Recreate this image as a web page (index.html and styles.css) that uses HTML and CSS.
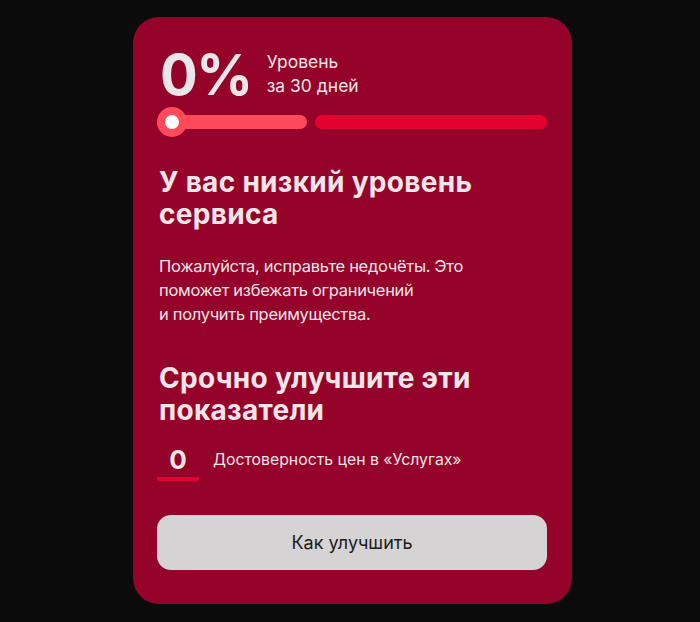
FILE: index.html
```html
<!DOCTYPE html>
<html lang="ru">
<head>
    <meta charset="UTF-8">
    <meta name="viewport" content="width=device-width, initial-scale=1.0">
    <title>Уровень сервиса</title>
    <link rel="stylesheet" href="styles.css">
</head>
<body>
    <div class="card">
        <!-- Уровень за 30 дней -->
        <div class="level">
            <span class="level-value">0%</span>
            <span class="level-caption">Уровень<br>за 30 дней</span>
        </div>
        <div class="progress">
            <div class="progress-low">
                <span class="knob"></span>
            </div>
            <div class="progress-rest"></div>
        </div>

        <h2>У вас низкий уровень сервиса</h2>
        <p class="note">Пожалуйста, исправьте недочёты. Это<br>поможет избежать ограничений<br>и&nbsp;получить преимущества.</p>

        <h2 class="urgent">Срочно улучшите эти показатели</h2>
        <div class="metric">
            <span class="metric-value">0</span>
            <span class="metric-name">Достоверность цен в «Услугах»</span>
        </div>

        <button type="button">Как улучшить</button>
    </div>
</body>
</html>
```

FILE: styles.css
```css
body {
    margin: 0;
    background-color: #0b0b0b;
    font-family: 'Inter', 'Noto Sans', sans-serif;
    height: 622px;
    overflow: hidden;
}

/* Карточка */
.card {
    box-sizing: border-box;
    width: 439px;
    height: 587px;
    margin: 17px 0 0 133px;
    padding: 30px 25px 0 24px;
    background-color: #96032a;
    border-radius: 26px;
    color: #ede3e6;
    display: flex;
    flex-direction: column;
}

.level {
    display: flex;
    align-items: flex-start;
    gap: 15px;
    padding-left: 3px;
}

.level-value {
    font-size: 56px;
    font-weight: 700;
    line-height: 56px;
    letter-spacing: -1.5px;
    color: #e8e6e7;
}

.level-caption {
    font-size: 17.5px;
    line-height: 24px;
    padding-top: 3px;
}

/* Шкала */
.progress {
    display: flex;
    align-items: center;
    gap: 8px;
    margin-top: 4px;
    height: 30px;
}

.progress-low {
    position: relative;
    width: 150px;
    height: 14px;
    border-radius: 7px;
    background-color: #ff4a5a;
}

.knob {
    position: absolute;
    left: 0;
    top: -8px;
    width: 14px;
    height: 14px;
    border: 8px solid #ff4a5a;
    border-radius: 50%;
    background-color: #ffffff;
}

.progress-rest {
    flex: 1;
    height: 14px;
    border-radius: 7px;
    background-color: #e4002f;
}

h2 {
    margin: 29px 0 0 2px;
    font-size: 28px;
    line-height: 32px;
    font-weight: 700;
    letter-spacing: 0.3px;
    color: #f0e6e9;
}

.note {
    margin: 24px 0 0 2px;
    font-size: 16.5px;
    line-height: 24px;
    letter-spacing: -0.3px;
}

.urgent {
    margin-top: 36px;
}

.metric {
    display: flex;
    align-items: center;
    gap: 14px;
    margin-top: 18px;
}

.metric-value {
    width: 42px;
    text-align: center;
    font-size: 26px;
    font-weight: 700;
    line-height: 32px;
    padding-bottom: 1px;
    border-bottom: 4px solid #e4002f;
    border-radius: 0 0 2px 2px;
    color: #e8e6e7;
}

.metric-name {
    font-size: 15.8px;
    line-height: 20px;
    margin-bottom: 6px;
}

button {
    margin-top: 34px;
    height: 55px;
    border: none;
    border-radius: 14px;
    background-color: #d5d3d4;
    color: #1c1c1c;
    font-family: inherit;
    font-size: 18px;
}
```
